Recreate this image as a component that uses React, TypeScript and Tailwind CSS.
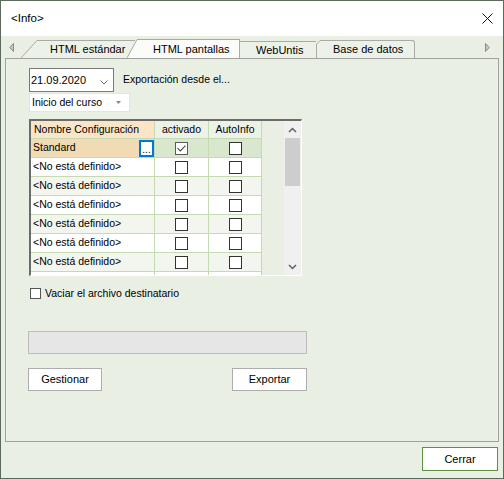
import React from "react";

const LINE = "border-[#c5dab3]";

const Box = ({ checked }: { checked?: boolean }) => (
  <span
    className={`flex h-[13px] w-[13px] items-center justify-center border bg-white ${
      checked ? "border-[#5a5a5a]" : "border-[#333333]"
    }`}
  >
    {checked && (
      <svg width="9" height="7" viewBox="0 0 9 7">
        <path d="M0.5 3.2 L3.3 6 L8.5 0.6" stroke="#4a4a4a" strokeWidth="1.1" fill="none" />
      </svg>
    )}
  </span>
);

// last row is only partly visible, its text falls below the frame
const rows = ["Standard", ...Array(6).fill("<No está definido>"), ""];

const ConfigTable = () => (
  <div className="flex h-[157px] w-[273px] overflow-hidden border-t-2 border-l-2 border-r border-b border-t-[#6b6b6b] border-l-[#6b6b6b] border-r-white border-b-white">
    <div className="flex w-[231px] flex-col">
      <div className={`flex h-[18px] shrink-0 border-b ${LINE}`}>
        <div className={`w-[124px] border-r ${LINE} bg-[#fce5c6] pl-[3px] leading-[17px]`}>
          Nombre Configuración
        </div>
        <div className={`w-[54px] border-r ${LINE} bg-[#edf2e8] text-center leading-[17px]`}>activado</div>
        <div className={`w-[53px] border-r ${LINE} bg-[#edf2e8] text-center leading-[17px]`}>AutoInfo</div>
      </div>
      {rows.map((name, i) => {
        const first = i === 0;
        const bg = first ? "" : i % 2 === 1 ? "bg-white" : "bg-[#f2f6ee]";
        return (
          <div key={i} className={`flex h-[19px] shrink-0 border-b ${LINE} ${bg}`}>
            <div
              className={`flex w-[124px] items-center justify-between border-r ${LINE} pl-[2px] ${
                first ? "bg-[#f1dbb4]" : ""
              }`}
            >
              <span>{name}</span>
              {first && (
                <span className="flex h-[17px] w-[15px] items-end justify-center border-2 border-[#0078d7] bg-white text-[10px] leading-[11px]">
                  ...
                </span>
              )}
            </div>
            <div
              className={`flex w-[54px] items-center justify-center border-r ${LINE} ${
                first ? "bg-[#d9e7cf]" : ""
              }`}
            >
              <Box checked={first} />
            </div>
            <div
              className={`flex w-[53px] items-center justify-center border-r ${LINE} ${
                first ? "bg-[#d9e7cf]" : ""
              }`}
            >
              <Box />
            </div>
          </div>
        );
      })}
    </div>
    <div className="w-[22px] bg-[#e9efe3]" />
    <div className="flex w-[17px] flex-col bg-[#f0f0f0]">
      <div className="flex h-[17px] items-center justify-center">
        <svg width="9" height="6" viewBox="0 0 9 6">
          <path d="M1 5 L4.5 1.5 L8 5" stroke="#606060" strokeWidth="1.5" fill="none" />
        </svg>
      </div>
      <div className="mx-[1px] h-[48px] bg-[#cdcdcd]" />
      <div className="flex-1" />
      <div className="flex h-[17px] items-center justify-center">
        <svg width="9" height="6" viewBox="0 0 9 6">
          <path d="M1 1 L4.5 4.5 L8 1" stroke="#606060" strokeWidth="1.5" fill="none" />
        </svg>
      </div>
    </div>
  </div>
);

const Tabs = () => (
  <div className="flex h-[22px] items-end text-[11px]">
    <div className="flex h-full w-[20px] items-center pl-[8px] pt-[1px]">
      <svg width="5" height="9" viewBox="0 0 5 9">
        <path d="M4.5 0.5 L0.8 4.5 L4.5 8.5 Z" fill="#c8c8c8" stroke="#8a8a8a" strokeWidth="1" />
      </svg>
    </div>
    <div className="flex h-[18px]">
      <svg width="16" height="18" viewBox="0 0 16 18" className="shrink-0">
        <polygon points="0,18 16,0.5 16,18" fill="#edf2e9" />
        <line x1="0" y1="18" x2="16" y2="0.5" stroke="#a9a9a9" strokeWidth="1" />
      </svg>
      <div className="w-[98px] border-t border-[#a9a9a9] bg-[#edf2e9] pl-[13px] leading-[17px]">
        HTML estándar
      </div>
    </div>
    <div className="relative z-10 -ml-[8px] flex h-[19px]">
      <svg width="10" height="19" viewBox="0 0 10 19" className="shrink-0">
        <polygon points="0,19 10,0.5 10,19" fill="#fbfcf9" />
        <line x1="0" y1="19" x2="10" y2="0.5" stroke="#a9a9a9" strokeWidth="1" />
      </svg>
      <div className="w-[103px] border-t border-r border-[#a9a9a9] bg-[#fbfcf9] pl-[16px] leading-[18px]">
        HTML pantallas
      </div>
    </div>
    <div className="h-[17px] w-[76px] border-t border-[#a9a9a9] bg-[#edf2e9] pl-[16px] leading-[16px]">
      WebUntis
    </div>
    <div className="flex h-[18px]">
      <svg width="4" height="18" viewBox="0 0 4 18" className="shrink-0">
        <polygon points="0,18 0,4 4,0.5 4,18" fill="#edf2e9" />
        <path d="M0 5 L4 0.5" stroke="#a9a9a9" strokeWidth="1" fill="none" />
        <line x1="0.5" y1="4.5" x2="0.5" y2="18" stroke="#a9a9a9" strokeWidth="1" />
      </svg>
      <div className="w-[95px] rounded-tr-[3px] border-t border-r border-[#a9a9a9] bg-[#edf2e9] pl-[13px] leading-[17px]">
        Base de datos
      </div>
    </div>
    <div className="flex-1" />
    <div className="flex h-full w-[18px] items-center pr-[13px] pt-[1px]">
      <svg width="5" height="9" viewBox="0 0 5 9">
        <path d="M0.5 0.5 L4.2 4.5 L0.5 8.5 Z" fill="#c8c8c8" stroke="#8a8a8a" strokeWidth="1" />
      </svg>
    </div>
  </div>
);

export default function App() {
  return (
    <div className="flex h-[479px] w-[504px] flex-col border border-[#5b6a5b] bg-[#e9efe3] font-['Liberation_Sans',Arial,sans-serif] text-[10.5px] text-black">
      <div className="flex h-[35px] shrink-0 items-center justify-between bg-white pl-[10px] pr-[10px]">
        <span className="text-[11.5px]">&lt;Info&gt;</span>
        <svg width="11" height="11" viewBox="0 0 11 11">
          <path d="M0.5 0.5 L10.5 10.5 M10.5 0.5 L0.5 10.5" stroke="#111" strokeWidth="1" />
        </svg>
      </div>

      <Tabs />

      <div className="ml-[4px] flex h-[384px] w-[494px] shrink-0 flex-col border border-[#a0a0a0] pl-[22px] pt-[9px]">
        <div className="flex items-center">
          <div className="ml-[1px] flex h-[24px] w-[85px] items-center justify-between border border-[#7a7a7a] bg-white pl-[1px] pr-[5px] text-[11px]">
            <span>21.09.2020</span>
            <svg width="8" height="5" viewBox="0 0 8 5" className="mt-[4px]">
              <path d="M0.5 0.5 L4 4 L7.5 0.5" stroke="#707070" strokeWidth="1" fill="none" />
            </svg>
          </div>
          <span className="ml-[9px]">Exportación desde el...</span>
        </div>
        <div className="ml-[1px] mt-[1px] flex h-[19px] w-[101px] items-center justify-between border border-[#e4e4e4] bg-white pl-[2px] pr-[8px]">
          <span>Inicio del curso</span>
          <svg width="5" height="3" viewBox="0 0 5 3">
            <path d="M0 0 L5 0 L2.5 3 Z" fill="#8a8a8a" />
          </svg>
        </div>
        <div className="ml-[1px] mt-[7px]">
          <ConfigTable />
        </div>
        <label className="ml-[2px] mt-[10px] flex items-center gap-[4px]">
          <span className="h-[11px] w-[11px] border border-[#555555] bg-white" />
          <span>Vaciar el archivo destinatario</span>
        </label>
        <div className="mt-[29px] h-[23px] w-[279px] border border-[#bcbcbc] bg-[#e6e6e6]" />
        <div className="mt-[14px] flex w-[279px] justify-between">
          <button className="h-[23px] w-[74px] border border-[#adadad] bg-white text-[11px]">Gestionar</button>
          <button className="h-[23px] w-[75px] border border-[#adadad] bg-white text-[11px]">Exportar</button>
        </div>
      </div>

      <div className="flex justify-end pr-[5px] pt-[5px]">
        <button className="h-[24px] w-[76px] border border-[#5f8f42] bg-white text-[11px]">Cerrar</button>
      </div>
    </div>
  );
}
